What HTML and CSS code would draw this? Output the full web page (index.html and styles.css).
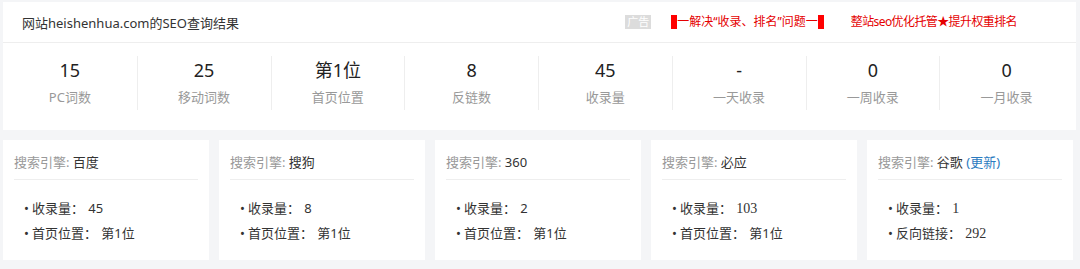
FILE: index.html
```html
<!DOCTYPE html>
<html lang="zh-CN">
<head>
    <meta charset="UTF-8">
    <meta name="viewport" content="width=device-width, initial-scale=1.0">
    <title>SEO查询结果</title>
    <link rel="stylesheet" href="styles.css">
</head>
<body>

    <div class="summary">
        <div class="summary-head">
            <div class="site-title">网站heishenhua.com的SEO查询结果</div>
            <div class="ads">
                <span class="ad-tag">广告</span>
                <span class="ad-link"><i class="red-block"></i>一解决“收录、排名”问题一<i class="red-block"></i></span>
                <span class="ad-link ad-second">整站seo优化托管★提升权重排名</span>
            </div>
        </div>
        <div class="stats">
            <div class="stat"><div class="num">15</div><div class="label">PC词数</div></div>
            <div class="stat"><div class="num">25</div><div class="label">移动词数</div></div>
            <div class="stat"><div class="num">第1位</div><div class="label">首页位置</div></div>
            <div class="stat"><div class="num">8</div><div class="label">反链数</div></div>
            <div class="stat"><div class="num">45</div><div class="label">收录量</div></div>
            <div class="stat"><div class="num">-</div><div class="label">一天收录</div></div>
            <div class="stat"><div class="num">0</div><div class="label">一周收录</div></div>
            <div class="stat"><div class="num">0</div><div class="label">一月收录</div></div>
        </div>
    </div>

    <div class="engines">
        <div class="card">
            <div class="card-head"><span class="muted">搜索引擎:</span> 百度</div>
            <ul>
                <li>收录量： <span class="val">45</span></li>
                <li>首页位置： <span class="val">第1位</span></li>
            </ul>
        </div>
        <div class="card">
            <div class="card-head"><span class="muted">搜索引擎:</span> 搜狗</div>
            <ul>
                <li>收录量： <span class="val">8</span></li>
                <li>首页位置： <span class="val">第1位</span></li>
            </ul>
        </div>
        <div class="card">
            <div class="card-head"><span class="muted">搜索引擎:</span> 360</div>
            <ul>
                <li>收录量： <span class="val">2</span></li>
                <li>首页位置： <span class="val">第1位</span></li>
            </ul>
        </div>
        <div class="card">
            <div class="card-head"><span class="muted">搜索引擎:</span> 必应</div>
            <ul>
                <li>收录量： <span class="val serif">103</span></li>
                <li>首页位置： <span class="val">第1位</span></li>
            </ul>
        </div>
        <div class="card">
            <div class="card-head"><span class="muted">搜索引擎:</span> 谷歌 <a class="update" href="#">(更新)</a></div>
            <ul>
                <li>收录量： <span class="val serif">1</span></li>
                <li>反向链接： <span class="val serif">292</span></li>
            </ul>
        </div>
    </div>

</body>
</html>
```

FILE: styles.css
```css
body {
    margin: 0;
    padding: 2px 4px 0 3px;
    background: #f4f5f7;
    font-family: 'Noto Sans', 'Noto Sans CJK SC', sans-serif;
    color: #333;
}

.summary {
    background: #fff;
    height: 128px;
}

.summary-head {
    display: flex;
    align-items: center;
    justify-content: space-between;
    height: 40px;
    padding: 0 0 0 19px;
    border-bottom: 1px solid #eeeeee;
}

.site-title {
    font-size: 13px;
}

.ads {
    display: flex;
    align-items: center;
    font-size: 12px;
    color: #e50000;
    padding-right: 59px;
}

.ad-tag {
    background: #dcdcdc;
    color: #fff;
    font-size: 11px;
    line-height: 14px;
    padding: 0 2px;
    margin-right: 20px;
}

.ad-link {
    display: flex;
    align-items: center;
    line-height: 14px;
}

.red-block {
    display: inline-block;
    width: 6px;
    height: 14px;
    background: #ff0000;
}

.ad-second {
    margin-left: 27px;
    letter-spacing: -0.6px;
}

.stats {
    display: grid;
    grid-template-columns: repeat(8, 1fr);
    padding: 13px 3px 0 0;
}

.stat {
    height: 54px;
    text-align: center;
    border-left: 1px solid #eeeeee;
}

.stat:first-child {
    border-left: none;
}

.num {
    font-size: 18px;
    line-height: 28px;
    color: #222;
}

.label {
    font-size: 13px;
    line-height: 26px;
    color: #999;
}

.engines {
    display: grid;
    grid-template-columns: repeat(5, 1fr);
    gap: 10px;
    margin-top: 10px;
    padding-right: 3px;
}

.card {
    background: #fff;
    height: 120px;
    padding: 0 11px;
}

.card-head {
    height: 38px;
    padding-top: 1px;
    line-height: 42px;
    font-size: 13px;
    border-bottom: 1px solid #eeeeee;
}

.muted {
    color: #999;
}

.update {
    color: #2b7bc0;
    text-decoration: none;
}

.card ul {
    list-style: none;
    margin: 0;
    padding: 16px 0 0 10px;
}

.card li {
    font-size: 13px;
    line-height: 25px;
}

.card li:before {
    content: '•';
    margin-right: 3px;
}

.val {
    margin-left: 1px;
}

.serif {
    font-family: 'Liberation Serif', serif;
    font-size: 14px;
}
```
